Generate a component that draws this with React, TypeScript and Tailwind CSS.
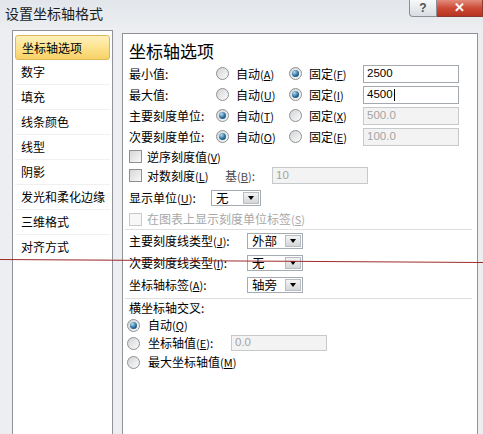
import React from 'react';

const navItems = ['坐标轴选项', '数字', '填充', '线条颜色', '线型', '阴影', '发光和柔化边缘', '三维格式', '对齐方式'];

const Key = ({ k }: { k: string }) => (
    <span className="text-[11px]">
        (<span className="underline underline-offset-1">{k}</span>)
    </span>
);

const Radio = ({ checked = false }: { checked?: boolean }) => (
    <span className="flex h-[13px] w-[13px] shrink-0 items-center justify-center rounded-full border border-[#8e9092] bg-linear-to-br from-[#d2d4d6] to-[#fbfbfb]">
        {checked && (
            <span className="h-[7px] w-[7px] rounded-full bg-[radial-gradient(circle_at_35%_30%,#b6dcf2,#2a6d9b_55%,#123b5a)]" />
        )}
    </span>
);

const Checkbox = ({ disabled = false }: { disabled?: boolean }) => (
    <span
        className={`block h-[13px] w-[13px] shrink-0 border ${
            disabled ? 'border-[#c9c9c9] bg-[#f7f7f7]' : 'border-[#8e8f8f] bg-linear-to-br from-[#d6d6d6] to-[#f9f9f9]'
        }`}
    />
);

const Field = ({ value, width, height, disabled = false, caret = false }: { value: string; width: string; height: string; disabled?: boolean; caret?: boolean }) => (
    <div
        className={`flex items-center border pl-[3px] font-['Liberation_Sans',sans-serif] text-[11.5px] ${width} ${height} ${
            disabled ? 'border-[#c6c9cc] bg-[#f3f3f3] text-[#a3a3a3]' : 'border-[#a4a9b0] bg-white text-black'
        }`}
    >
        {value}
        {caret && <span className="ml-px h-[12px] w-px bg-black" />}
    </div>
);

const Select = ({ value, width }: { value: string; width: string }) => (
    <div className={`flex h-[16px] border border-[#a5abb3] bg-white ${width}`}>
        <span className="flex-1 pl-[4px] text-[12.5px] leading-[14px]">{value}</span>
        <span className="m-px flex w-[16px] items-center justify-center border border-[#b9bcc0] bg-linear-to-b from-[#f4f4f4] to-[#d4d6d8]">
            <span className="h-0 w-0 border-t-[4px] border-r-[3.5px] border-l-[3.5px] border-t-black border-r-transparent border-l-transparent" />
        </span>
    </div>
);

const ValueRow = ({ label, autoKey, fixedKey, auto, value, caret }: { label: string; autoKey: string; fixedKey: string; auto: boolean; value: string; caret?: boolean }) => (
    <div className="flex h-[21px] items-center">
        <span className="w-[87px]">{label}</span>
        <div className="flex w-[73px] items-center gap-[7px]">
            <Radio checked={auto} />
            <span>自动<Key k={autoKey} /></span>
        </div>
        <div className="flex w-[74px] items-center gap-[7px]">
            <Radio checked={!auto} />
            <span>固定<Key k={fixedKey} /></span>
        </div>
        <Field value={value} width="w-[96px]" height="h-[18px]" disabled={auto} caret={caret} />
    </div>
);

const App: React.FC = () => {
    return (
        <div className="relative h-[434px] w-[483px] overflow-hidden bg-[#eceef1] font-['Noto_Sans_CJK_SC','Noto_Sans',sans-serif] text-[12px] text-black">
            {/* title bar */}
            <div className="flex h-[30px] items-start bg-linear-to-b from-[#e2e6ea] to-[#eceef1]">
                <div className="pt-[3px] pl-[5px] text-[14px] text-[#1c1c1c]">设置坐标轴格式</div>
                <div className="ml-auto flex">
                    <div className="flex h-[17px] w-[28px] items-center justify-center rounded-bl-[4px] border border-t-0 border-[#8c9096] bg-linear-to-b from-[#f7f8f9] to-[#d9dde2] font-['Liberation_Sans',sans-serif] text-[12px] font-bold text-[#4a4f55]">
                        ?
                    </div>
                    <div className="flex h-[17px] w-[46px] items-center justify-center border border-t-0 border-l-0 border-[#8a3a30] bg-linear-to-b from-[#e28a7c] via-[#cc4a36] to-[#b8331f] font-['Liberation_Sans',sans-serif] text-[13px] font-bold text-white">
                        ✕
                    </div>
                </div>
            </div>

            <div className="flex gap-[9px] pl-[12px]">
                {/* left nav */}
                <div className="h-[420px] w-[101px] border border-[#8f9398] bg-white px-[2px] pt-[4px]">
                    {navItems.map((item, i) => (
                        <div
                            key={item}
                            className={`flex h-[25px] items-center pl-[6px] ${
                                i === 0
                                    ? 'rounded-[3px] border border-[#dcb955] bg-linear-to-b from-[#fff1bd] via-[#fde38d] to-[#f6d266] pl-[5px]'
                                    : 'border-b border-[#f0f0f0]'
                            }`}
                        >
                            {item}
                        </div>
                    ))}
                </div>

                {/* right content */}
                <div className="mt-[3px] h-[420px] w-[356px] border border-[#8f9398] bg-white pt-[5px]">
                    <div className="pl-[6px]">
                        <div className="h-[24px] text-[17px] leading-[24px]">坐标轴选项</div>
                        <ValueRow label="最小值:" autoKey="A" fixedKey="F" auto={false} value="2500" />
                        <ValueRow label="最大值:" autoKey="U" fixedKey="I" auto={false} value="4500" caret />
                        <ValueRow label="主要刻度单位:" autoKey="T" fixedKey="X" auto value="500.0" />
                        <ValueRow label="次要刻度单位:" autoKey="O" fixedKey="E" auto value="100.0" />

                        <div className="flex h-[19px] items-center gap-[5px]">
                            <Checkbox />
                            <span>逆序刻度值<Key k="V" /></span>
                        </div>
                        <div className="flex h-[19px] items-center">
                            <Checkbox />
                            <span className="ml-[5px] w-[78px]">对数刻度<Key k="L" /></span>
                            <span className="w-[47px] text-[#4d4d4d]">基<Key k="B" />:</span>
                            <Field value="10" width="w-[96px]" height="h-[17px]" disabled />
                        </div>
                        <div className="flex h-[26px] items-center">
                            <span className="w-[82px]">显示单位<Key k="U" />:</span>
                            <Select value="无" width="w-[50px]" />
                        </div>
                        <div className="flex h-[16px] items-center gap-[5px] text-[#a8a8a8]">
                            <Checkbox disabled />
                            <span>在图表上显示刻度单位标签<Key k="S" /></span>
                        </div>
                    </div>

                    <div className="mt-[2px] mr-[5px] ml-[2px] h-px bg-[#dedede]" />

                    <div className="pl-[6px]">
                        <div className="flex h-[22px] items-center">
                            <span className="w-[118px]">主要刻度线类型<Key k="J" />:</span>
                            <Select value="外部" width="w-[56px]" />
                        </div>
                        <div className="flex h-[22px] items-center">
                            <span className="w-[118px]">次要刻度线类型<Key k="I" />:</span>
                            <Select value="无" width="w-[56px]" />
                        </div>
                        <div className="flex h-[22px] items-center">
                            <span className="w-[118px]">坐标轴标签<Key k="A" />:</span>
                            <Select value="轴旁" width="w-[56px]" />
                        </div>
                    </div>

                    <div className="mt-[2px] mr-[5px] ml-[2px] h-px bg-[#dedede]" />

                    <div className="pl-[6px]">
                        <div className="flex h-[18px] items-center">横坐标轴交叉:</div>
                        <div className="-ml-[2px] flex h-[16px] items-center gap-[8px]">
                            <Radio checked />
                            <span>自动<Key k="Q" /></span>
                        </div>
                        <div className="-ml-[2px] flex h-[20px] items-center">
                            <Radio />
                            <span className="ml-[8px] w-[83px]">坐标轴值<Key k="E" />:</span>
                            <Field value="0.0" width="w-[96px]" height="h-[16px]" disabled />
                        </div>
                        <div className="-ml-[2px] flex h-[18px] items-center gap-[8px]">
                            <Radio />
                            <span>最大坐标轴值<Key k="M" /></span>
                        </div>
                    </div>
                </div>
            </div>

            {/* red guide line drawn over the screenshot */}
            <svg className="pointer-events-none absolute top-0 left-0" width="483" height="434">
                <line x1="0" y1="259.5" x2="483" y2="262.5" stroke="#a12b2b" strokeWidth="1.2" />
            </svg>
        </div>
    );
};

export default App;
